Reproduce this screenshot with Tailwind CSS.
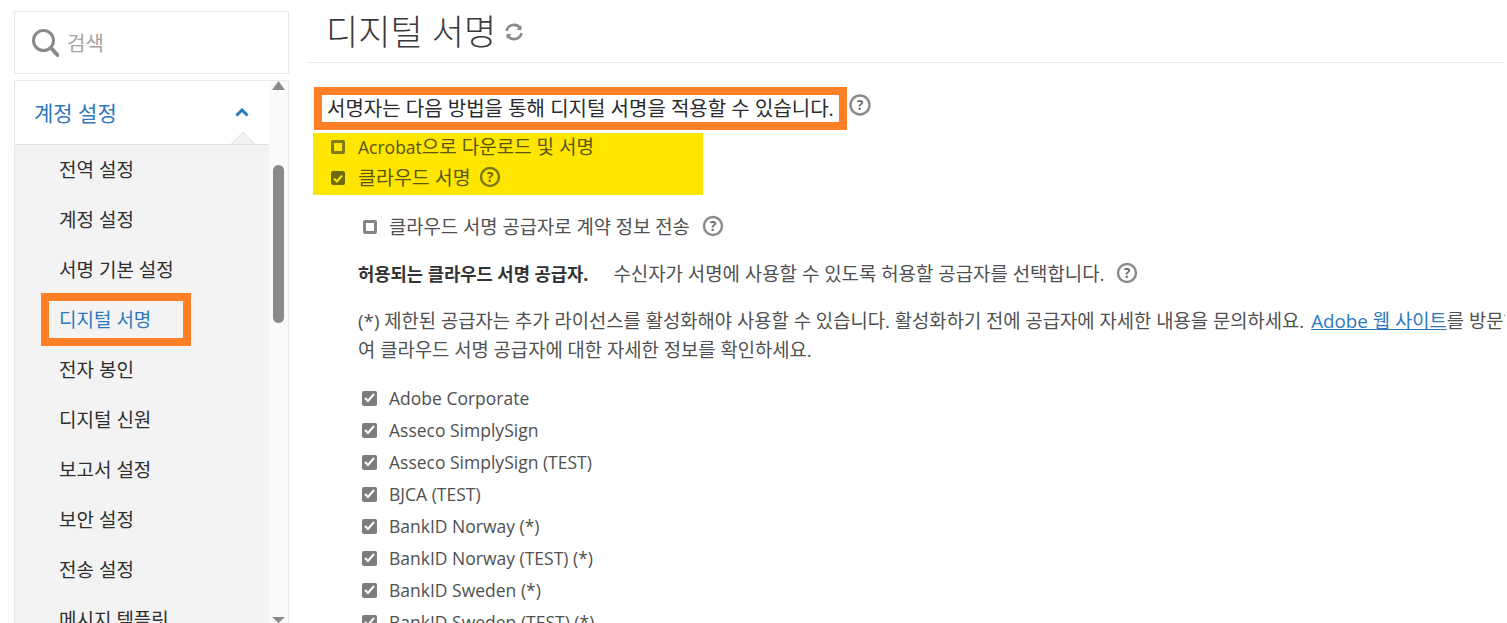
<!DOCTYPE html>
<html lang="ko"><head><meta charset="utf-8">
<script src="https://cdn.jsdelivr.net/npm/@tailwindcss/browser@4"></script></head>
<body class="bg-white">
<div class="flex w-[1507px] h-[623px] overflow-hidden bg-white text-[#505050] font-['Open_Sans','Noto_Sans_CJK_KR',sans-serif]">
  <aside class="w-[307px] shrink-0 pl-[14px] pr-[18px] pt-[11px] flex flex-col">
    <div class="h-[63px] shrink-0 border border-[#e8e8e8] flex items-center pl-[16px] gap-[8px]">
      <svg width="28" height="30" viewBox="0 0 28 30" fill="none" stroke="#8a8a8a"><circle cx="12.5" cy="12.5" r="10" stroke-width="3"/><path d="M20 20l6.5 7" stroke-width="4" stroke-linecap="round"/></svg>
      <span class="text-[20px] text-[#a3a3a3] pt-[3px]">검색</span>
    </div>
    <div class="mt-[6px] flex-1 min-h-0 border-x border-t border-[#e8e8e8] flex overflow-hidden">
      <nav class="flex-1 min-w-0 flex flex-col">
        <div class="h-[64px] shrink-0 relative flex items-center justify-between pl-[19px] pr-[20px] border-b border-[#e1e1e1] bg-white">
          <span class="text-[21px] text-[#2d79c0] pt-[2px]">계정 설정</span>
          <svg width="14" height="9" viewBox="0 0 14 9" fill="none" stroke="#2d79c0" stroke-width="3"><path d="M1.5 7.5L7 2l5.5 5.5"/></svg>
          <span class="absolute right-[17px] -bottom-[9px] w-[18px] h-[18px] bg-[#f3f3f3] rotate-45 border-l border-t border-[#e1e1e1] [clip-path:polygon(0_0,100%_0,0_100%)]"></span>
        </div>
        <ul class="flex-1 bg-[#f3f3f3] text-[19px] text-[#2f2f2f] flex flex-col">
          <li class="h-[50px] shrink-0 flex items-center pl-[44px]">전역 설정</li>
          <li class="h-[50px] shrink-0 flex items-center pl-[44px]">계정 설정</li>
          <li class="h-[50px] shrink-0 flex items-center pl-[44px]">서명 기본 설정</li>
          <li class="h-[50px] shrink-0 flex items-center pl-[44px] relative text-[#2d79c0]">디지털 서명<span class="absolute left-[26px] -top-[2px] w-[150px] h-[53px] border-[8px] border-[#ff7f27]"></span></li>
          <li class="h-[50px] shrink-0 flex items-center pl-[44px]">전자 봉인</li>
          <li class="h-[50px] shrink-0 flex items-center pl-[44px]">디지털 신원</li>
          <li class="h-[50px] shrink-0 flex items-center pl-[44px]">보고서 설정</li>
          <li class="h-[50px] shrink-0 flex items-center pl-[44px]">보안 설정</li>
          <li class="h-[50px] shrink-0 flex items-center pl-[44px]">전송 설정</li>
          <li class="h-[50px] shrink-0 flex items-center pl-[44px]">메시지 템플릿</li>
        </ul>
      </nav>
      <div class="w-[19px] shrink-0 bg-[#fafafa] flex flex-col items-center relative">
        <svg width="13" height="10" viewBox="0 0 13 10"><path d="M6.5 0L13 9H0z" fill="#8a8a8a"/></svg>
        <div class="mt-[74px] w-[11px] h-[158px] rounded-[6px] bg-[#8a8a8a]"></div>
        <svg class="absolute bottom-[0px]" width="13" height="6" viewBox="0 0 13 6"><path d="M0 0H13L6.5 6z" fill="#8a8a8a"/></svg>
      </div>
    </div>
  </aside>
  <main class="w-[1198px] shrink-0 overflow-hidden">
    <div class="h-[63px] border-b border-[#e8e8e8] pl-[19px] flex items-start">
      <h1 class="text-[35px] font-light leading-[40px] pt-[12px] h-[52px] text-[#3a3a3a] whitespace-nowrap">디지털 서명</h1>
      <svg class="mt-[22px] ml-[8px]" width="20" height="20" viewBox="0 0 20 20" fill="none" stroke="#8a8a8a" stroke-width="2.6"><path d="M2.600 9a7.500 7.500 0 0 1 13.800-2.500"/><path d="M17.400 11a7.500 7.500 0 0 1-13.800 2.500"/><path d="M17.500 3v5h-5zM2.500 17v-5h5z" fill="#8a8a8a" stroke="none"/></svg>
    </div>
    <div class="pt-[24px] pl-[7px]">
      <div class="flex items-center">
        <p class="h-[43px] w-[533px] border-[8px] border-[#ff7f27] pl-[5px] flex items-center text-[20px] text-[#2b2b2b] whitespace-nowrap">서명자는 다음 방법을 통해 디지털 서명을 적용할 수 있습니다.</p>
        <svg class="ml-[2px] -mt-[7px]" width="22" height="22" viewBox="0 0 22 22"><circle cx="11" cy="11" r="9.500" fill="none" stroke="#8a8a8a" stroke-width="2.400"/><text x="11" y="16" text-anchor="middle" font-size="14" font-weight="700" fill="#6e6e6e" font-family="Open Sans">?</text></svg>
      </div>
      <div class="mt-[3px] -ml-[1px] w-[390px] h-[62px] bg-[#ffe600] pl-[18px] pt-[1px] text-[19px] text-[#5a5612]">
        <label class="h-[26px] flex items-center gap-[13px]">
          <span class="w-[14px] h-[14px] border-[3px] border-[#7f7b1a] rounded-[2px]"></span><span class="whitespace-nowrap"><span class="text-[17.500px]">Acrobat</span>으로 다운로드 및 서명</span>
        </label>
        <label class="mt-[2px] h-[32px] flex items-center gap-[13px]">
          <span class="w-[14px] h-[14px] bg-[#6e6a10] rounded-[2px] flex items-center justify-center"><svg width="10" height="9" viewBox="0 0 10 9" fill="none" stroke="#ffe600" stroke-width="2"><path d="M1 4.500l3 3 5-6"/></svg></span>
          <span class="whitespace-nowrap text-[19.500px]">클라우드 서명</span>
          <svg class="-mt-[2px] -ml-[5px]" width="22" height="22" viewBox="0 0 22 22"><circle cx="11" cy="11" r="9" fill="none" stroke="#7c7812" stroke-width="2.400"/><text x="11" y="16" text-anchor="middle" font-size="14" font-weight="700" fill="#6e6a10" font-family="Open Sans">?</text></svg>
        </label>
      </div>
      <div class="pl-[48px] pt-[18px] text-[18.800px]">
        <label class="h-[28px] flex items-center gap-[12px]">
          <span class="ml-[1px] w-[14px] h-[14px] border-[3px] border-[#858585] rounded-[2px]"></span><span class="whitespace-nowrap">클라우드 서명 공급자로 계약 정보 전송</span>
          <svg class="-mt-[2px]" width="22" height="22" viewBox="0 0 22 22"><circle cx="11" cy="11" r="9" fill="none" stroke="#8a8a8a" stroke-width="2.400"/><text x="11" y="16" text-anchor="middle" font-size="14" font-weight="700" fill="#6e6e6e" font-family="Open Sans">?</text></svg>
        </label>
        <div class="-ml-[4px] mt-[19px] h-[28px] flex items-center whitespace-nowrap">
          <b class="font-bold text-[17.700px] text-[#333]">허용되는 클라우드 서명 공급자.</b><span class="ml-[25px] text-[18.900px]">수신자가 서명에 사용할 수 있도록 허용할 공급자를 선택합니다.</span>
          <svg class="ml-[11px] -mt-[2px]" width="22" height="22" viewBox="0 0 22 22"><circle cx="11" cy="11" r="9" fill="none" stroke="#8a8a8a" stroke-width="2.400"/><text x="11" y="16" text-anchor="middle" font-size="14" font-weight="700" fill="#6e6e6e" font-family="Open Sans">?</text></svg>
        </div>
        <p class="-ml-[4px] mt-[19px] whitespace-nowrap leading-[29px]">(*) 제한된 공급자는 추가 라이선스를 활성화해야 사용할 수 있습니다. 활성화하기 전에 공급자에 자세한 내용을 문의하세요. <a class="text-[#2d79c0] underline ml-[2px]">Adobe 웹 사이트</a>를 방문하<br>여 클라우드 서명 공급자에 대한 자세한 정보를 확인하세요.</p>
        <ul class="mt-[17px] text-[17.500px]">
          <li class="h-[32px] flex items-center gap-[12px]"><span class="w-[15px] h-[15px] bg-[#7d7d7d] rounded-[2px] flex items-center justify-center"><svg width="11" height="10" viewBox="0 0 11 10" fill="none" stroke="#fff" stroke-width="2"><path d="M1 5l3 3 6-7"/></svg></span>Adobe Corporate</li>
          <li class="h-[32px] flex items-center gap-[12px]"><span class="w-[15px] h-[15px] bg-[#7d7d7d] rounded-[2px] flex items-center justify-center"><svg width="11" height="10" viewBox="0 0 11 10" fill="none" stroke="#fff" stroke-width="2"><path d="M1 5l3 3 6-7"/></svg></span>Asseco SimplySign</li>
          <li class="h-[32px] flex items-center gap-[12px]"><span class="w-[15px] h-[15px] bg-[#7d7d7d] rounded-[2px] flex items-center justify-center"><svg width="11" height="10" viewBox="0 0 11 10" fill="none" stroke="#fff" stroke-width="2"><path d="M1 5l3 3 6-7"/></svg></span>Asseco SimplySign (TEST)</li>
          <li class="h-[32px] flex items-center gap-[12px]"><span class="w-[15px] h-[15px] bg-[#7d7d7d] rounded-[2px] flex items-center justify-center"><svg width="11" height="10" viewBox="0 0 11 10" fill="none" stroke="#fff" stroke-width="2"><path d="M1 5l3 3 6-7"/></svg></span>BJCA (TEST)</li>
          <li class="h-[32px] flex items-center gap-[12px]"><span class="w-[15px] h-[15px] bg-[#7d7d7d] rounded-[2px] flex items-center justify-center"><svg width="11" height="10" viewBox="0 0 11 10" fill="none" stroke="#fff" stroke-width="2"><path d="M1 5l3 3 6-7"/></svg></span>BankID Norway (*)</li>
          <li class="h-[32px] flex items-center gap-[12px]"><span class="w-[15px] h-[15px] bg-[#7d7d7d] rounded-[2px] flex items-center justify-center"><svg width="11" height="10" viewBox="0 0 11 10" fill="none" stroke="#fff" stroke-width="2"><path d="M1 5l3 3 6-7"/></svg></span>BankID Norway (TEST) (*)</li>
          <li class="h-[32px] flex items-center gap-[12px]"><span class="w-[15px] h-[15px] bg-[#7d7d7d] rounded-[2px] flex items-center justify-center"><svg width="11" height="10" viewBox="0 0 11 10" fill="none" stroke="#fff" stroke-width="2"><path d="M1 5l3 3 6-7"/></svg></span>BankID Sweden (*)</li>
          <li class="h-[32px] flex items-center gap-[12px]"><span class="w-[15px] h-[15px] bg-[#7d7d7d] rounded-[2px] flex items-center justify-center"><svg width="11" height="10" viewBox="0 0 11 10" fill="none" stroke="#fff" stroke-width="2"><path d="M1 5l3 3 6-7"/></svg></span>BankID Sweden (TEST) (*)</li>
        </ul>
      </div>
    </div>
  </main>
</div>
</body></html>
